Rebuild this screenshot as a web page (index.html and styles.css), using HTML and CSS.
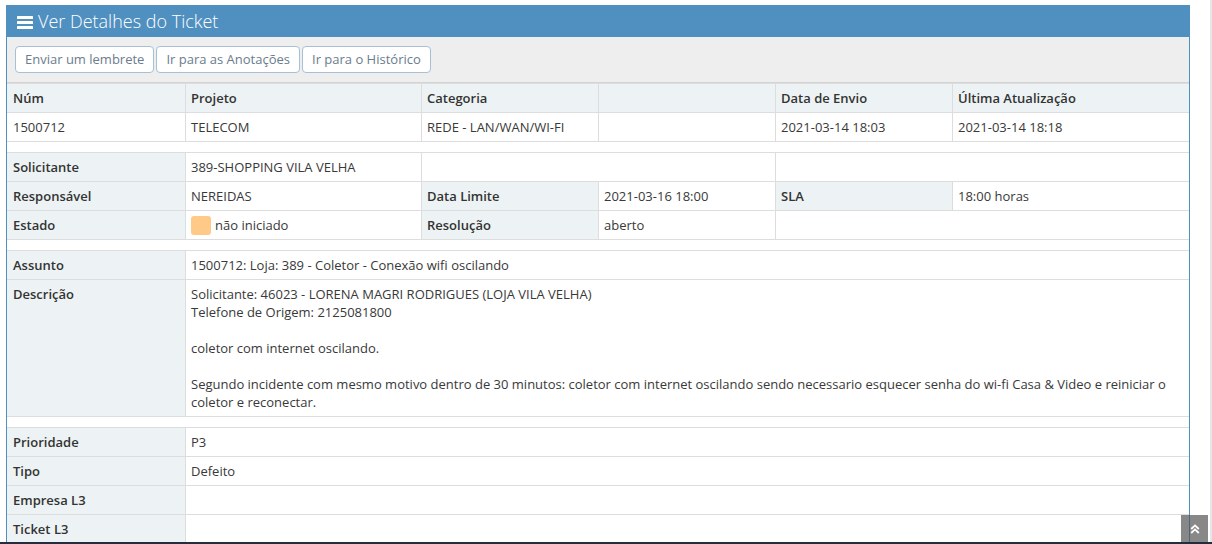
FILE: index.html
```html
<!DOCTYPE html>
<html lang="pt-BR">
<head>
<meta charset="utf-8">
<title>Ver Detalhes do Ticket</title>
<link rel="stylesheet" href="styles.css">
</head>
<body>
<div class="widget">
  <div class="widget-header">
    <svg class="icon-bars" width="16" height="13" viewBox="0 0 16 13" aria-hidden="true">
      <rect x="0" y="0" width="16" height="3" rx="0.6" fill="#fff"/>
      <rect x="0" y="5" width="16" height="3" rx="0.6" fill="#fff"/>
      <rect x="0" y="10" width="16" height="3" rx="0.6" fill="#fff"/>
    </svg>
    <h4 class="widget-title">Ver Detalhes do Ticket</h4>
  </div>
  <div class="toolbox">
    <div class="btn-group">
      <button class="btn">Enviar um lembrete</button>
      <button class="btn">Ir para as Anotações</button>
      <button class="btn">Ir para o Histórico</button>
    </div>
  </div>
  <table class="details">
    <colgroup>
      <col class="c1"><col class="c2"><col class="c3"><col class="c4"><col class="c5"><col class="c6">
    </colgroup>
    <tbody>
      <tr>
        <th>Núm</th><th>Projeto</th><th>Categoria</th><th></th><th>Data de Envio</th><th>Última Atualização</th>
      </tr>
      <tr>
        <td>1500712</td><td>TELECOM</td><td>REDE - LAN/WAN/WI-FI</td><td></td><td>2021-03-14 18:03</td><td>2021-03-14 18:18</td>
      </tr>
      <tr class="spacer"><td colspan="6"></td></tr>
      <tr>
        <th>Solicitante</th><td>389-SHOPPING VILA VELHA</td><td colspan="2"></td><td colspan="2"></td>
      </tr>
      <tr>
        <th>Responsável</th><td>NEREIDAS</td><th>Data Limite</th><td>2021-03-16 18:00</td><th>SLA</th><td>18:00 horas</td>
      </tr>
      <tr>
        <th>Estado</th><td><span class="status-box"></span>não iniciado</td><th>Resolução</th><td>aberto</td><td colspan="2"></td>
      </tr>
      <tr class="spacer"><td colspan="6"></td></tr>
      <tr>
        <th>Assunto</th><td colspan="5">1500712: Loja: 389 - Coletor - Conexão wifi oscilando</td>
      </tr>
      <tr>
        <th class="top">Descrição</th>
        <td colspan="5">Solicitante: 46023 - LORENA MAGRI RODRIGUES (LOJA VILA VELHA)<br>Telefone de Origem: 2125081800<br><br>coletor com internet oscilando.<br><br>Segundo incidente com mesmo motivo dentro de 30 minutos: coletor com internet oscilando sendo necessario esquecer senha do wi-fi Casa &amp; Video e reiniciar o coletor e reconectar.</td>
      </tr>
      <tr class="spacer"><td colspan="6"></td></tr>
      <tr><th>Prioridade</th><td colspan="5">P3</td></tr>
      <tr><th>Tipo</th><td colspan="5">Defeito</td></tr>
      <tr><th>Empresa L3</th><td colspan="5"></td></tr>
      <tr><th>Ticket L3</th><td colspan="5"></td></tr>
    </tbody>
  </table>
</div>
<a class="scroll-up" href="#" aria-label="Topo">
  <svg width="10" height="10" viewBox="0 0 10 10" aria-hidden="true">
    <polyline points="1.2,5 5,1.4 8.8,5" fill="none" stroke="#fff" stroke-width="1.8"/>
    <polyline points="1.2,9 5,5.4 8.8,9" fill="none" stroke="#fff" stroke-width="1.8"/>
  </svg>
</a>
<div class="right-edge"></div>
<div class="bottom-bar"></div>
</body>
</html>
```

FILE: styles.css
```css
* { box-sizing: border-box; }

html, body {
  margin: 0;
  padding: 0;
  background: #fff;
}

body {
  padding: 5px 22px 0 6px;
  font-family: "Open Sans", "Noto Sans", "Liberation Sans", sans-serif;
  font-size: 13px;
  line-height: 18px;
  color: #393939;
  overflow: hidden;
}

.widget {
  width: 1184px;
  border: 1px solid #5090c1;
  border-bottom: 0;
  background: #fff;
}

.widget-header {
  display: flex;
  align-items: center;
  gap: 5px;
  height: 31px;
  padding-left: 10px;
  background: #5090c1;
  color: #fff;
}

.icon-bars {
  display: block;
  margin-top: 1px;
}

.widget-title {
  margin: 0;
  font-size: 18px;
  font-weight: 300;
  line-height: 31px;
  color: #fff;
}

.toolbox {
  padding: 9px 8px;
  background: #eeeeee;
  border-bottom: 1px solid #d3d3d3;
}

.btn-group {
  display: flex;
  gap: 2px;
}

.btn {
  height: 27px;
  padding: 0 9px;
  font-family: inherit;
  font-size: 13px;
  line-height: 25px;
  color: #6a7c8d;
  background: #fff;
  border: 1px solid #a6c0d8;
  border-radius: 4px;
  cursor: pointer;
}

.details {
  width: 1182px;
  table-layout: fixed;
  border-collapse: separate;
  border-spacing: 0;
}

.c1 { width: 178px; }
.c2 { width: 236px; }
.c3 { width: 177px; }
.c4 { width: 177px; }
.c5 { width: 177px; }
.c6 { width: 237px; }

.details th,
.details td {
  height: 29px;
  padding: 5px;
  border-top: 1px solid #dddddd;
  border-left: 1px solid #dddddd;
  text-align: left;
  vertical-align: top;
  font-size: 13px;
  line-height: 18px;
}

.details th {
  background: #edf3f4;
  font-weight: 600;
  color: #333;
}

.details td {
  background: #fff;
  font-weight: 400;
}

.details tr > :first-child {
  border-left: 0;
  padding-left: 6px;
}

.details tr.spacer td {
  height: 11px;
  padding: 0;
  background: #fff;
}

.status-box {
  display: inline-block;
  width: 20px;
  height: 19px;
  margin: 0 4px -1px 0;
  vertical-align: top;
  background: #ffc987;
  border-radius: 3px;
}

.scroll-up {
  position: fixed;
  right: 4px;
  bottom: 2px;
  width: 27px;
  height: 27px;
  display: flex;
  align-items: center;
  justify-content: center;
  background: rgba(80, 80, 80, 0.68);
  z-index: 5;
}

.scroll-up svg { display: block; }

.right-edge {
  position: fixed;
  top: 0;
  right: 0;
  width: 2px;
  height: 100%;
  background: #e6e6e6;
}

.bottom-bar {
  position: fixed;
  left: 0;
  right: 0;
  bottom: 0;
  height: 2px;
  background: #232d3b;
  z-index: 6;
}
```
